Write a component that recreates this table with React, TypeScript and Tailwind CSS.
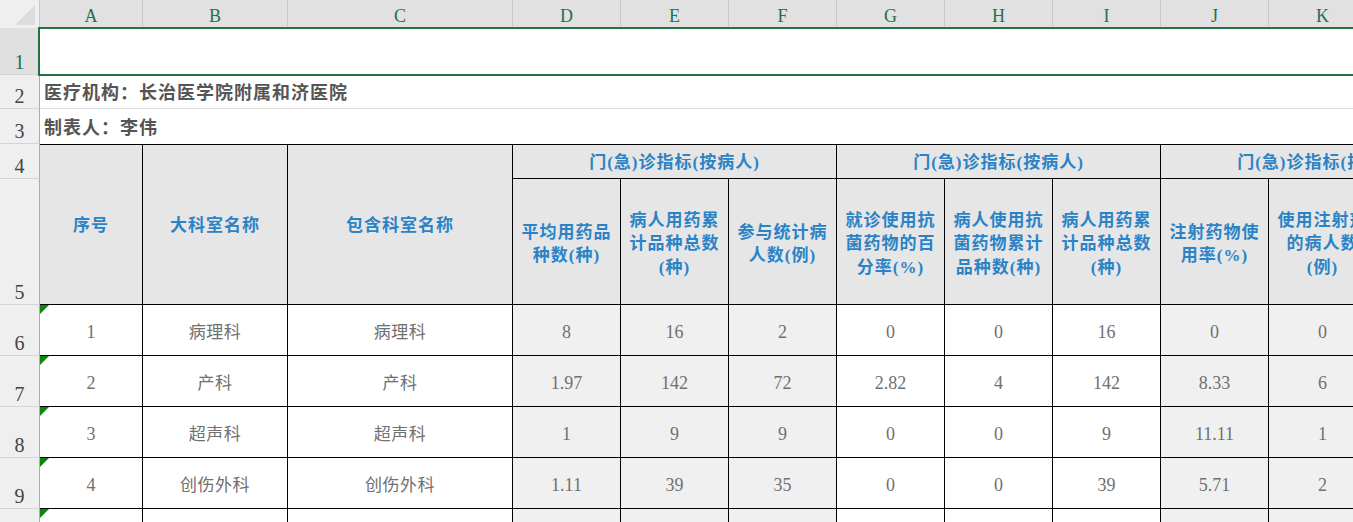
import React from 'react';

const cols = ['A', 'B', 'C', 'D', 'E', 'F', 'G', 'H', 'I', 'J', 'K', 'L'];

const subHeaders: string[][] = [
    ['平均用药品', '种数(种)'],
    ['病人用药累', '计品种总数', '(种)'],
    ['参与统计病', '人数(例)'],
    ['就诊使用抗', '菌药物的百', '分率(%)'],
    ['病人使用抗', '菌药物累计', '品种数(种)'],
    ['病人用药累', '计品种总数', '(种)'],
    ['注射药物使', '用率(%)'],
    ['使用注射剂', '的病人数', '(例)'],
    [''],
];

const rows: string[][] = [
    ['1', '病理科', '病理科', '8', '16', '2', '0', '0', '16', '0', '0', ''],
    ['2', '产科', '产科', '1.97', '142', '72', '2.82', '4', '142', '8.33', '6', ''],
    ['3', '超声科', '超声科', '1', '9', '9', '0', '0', '9', '11.11', '1', ''],
    ['4', '创伤外科', '创伤外科', '1.11', '39', '35', '0', '0', '39', '5.71', '2', ''],
    ['', '', '', '', '', '', '', '', '', '', '', ''],
];

const FONT = '[font-family:"Liberation_Serif","Noto_Sans_CJK_SC",serif]';

function RowHead({ n, active }: { n: number; active?: boolean }) {
    return (
        <div
            className={`flex items-end justify-center pb-[2px] border-r border-b border-r-[#ababab] border-b-[#d4d4d4] text-[20px] leading-none ${FONT} ${
                active ? 'bg-[#e0e0e0] text-[#217346]' : 'bg-[#efefef] text-[#444]'
            }`}
        >
            {n}
        </div>
    );
}

export default function App() {
    return (
        <div className={`w-[1353px] h-[522px] overflow-hidden bg-white ${FONT}`}>
            <div className="grid w-[1485px] grid-cols-[40px_103px_145px_225px_repeat(9,108px)] grid-rows-[28px_47px_34px_35px_35px_126px_repeat(5,51px)]">
                {/* Column headers */}
                <div className="relative bg-[#efefef] border-r border-r-[#c8c8c8]">
                    <div className="absolute right-[4px] bottom-[3px] w-0 h-0 border-l-[20px] border-b-[20px] border-l-transparent border-b-[#dcdcdc]" />
                </div>
                {cols.map((c) => (
                    <div
                        key={c}
                        className="flex items-end justify-center pb-[3px] bg-[#e1e1e1] border-r border-r-[#c8c8c8] text-[18px] leading-none text-[#1e7052]"
                    >
                        {c}
                    </div>
                ))}

                {/* Row 1 - selected */}
                <RowHead n={1} active />
                <div className="relative col-span-12">
                    <div className="absolute -top-px -left-[2px] -bottom-px right-0 border-2 border-[#217346]" />
                </div>

                {/* Row 2 */}
                <RowHead n={2} />
                <div className="col-span-12 flex items-center pl-[4px] pt-[3px] border-b border-b-[#dadada] text-[18px] font-bold tracking-[1px] text-[#555]">
                    医疗机构：长治医学院附属和济医院
                </div>

                {/* Row 3 */}
                <RowHead n={3} />
                <div className="col-span-12 flex items-center pl-[4px] pt-[3px] text-[18px] font-bold tracking-[1px] text-[#555]">
                    制表人：李伟
                </div>

                {/* Row 4 */}
                <RowHead n={4} />
                {['序号', '大科室名称', '包含科室名称'].map((t) => (
                    <div
                        key={t}
                        className="row-span-2 flex items-center justify-center pt-[3px] bg-[#e6e6e6] border-t border-r border-b border-black text-[17px] font-bold tracking-[1px] text-[#2b83c6]"
                    >
                        {t}
                    </div>
                ))}
                {[0, 1, 2].map((i) => (
                    <div
                        key={i}
                        className="col-span-3 flex items-center justify-center pt-[3px] bg-[#e6e6e6] border-t border-r border-b border-black text-[17px] font-bold tracking-[1px] text-[#2b83c6]"
                    >
                        门(急)诊指标(按病人)
                    </div>
                ))}

                {/* Row 5 */}
                <RowHead n={5} />
                {subHeaders.map((lines, i) => (
                    <div
                        key={i}
                        className="flex flex-col items-center justify-center pt-[5px] bg-[#e6e6e6] border-r border-b border-black text-[17px] leading-[23.5px] font-bold tracking-[1px] text-[#2b83c6]"
                    >
                        {lines.map((l, j) => (
                            <span key={j} className="whitespace-nowrap">{l}</span>
                        ))}
                    </div>
                ))}

                {/* Data rows */}
                {rows.map((r, ri) => (
                    <React.Fragment key={ri}>
                        <RowHead n={ri + 6} />
                        {r.map((v, ci) => {
                            const shaded = (ci >= 3 && ci <= 5) || ci >= 9;
                            const isNum = ci === 0 || ci >= 3;
                            return (
                                <div
                                    key={ci}
                                    className={`relative flex items-center justify-center border-r border-b border-black text-[#707070] ${
                                        shaded ? 'bg-[#f0f0f0]' : 'bg-white'
                                    } ${isNum ? 'text-[18px]' : 'text-[17px] tracking-[0.5px]'}`}
                                >
                                    {ci === 0 && (
                                        <div className="absolute left-0 top-0 w-0 h-0 border-t-[9px] border-r-[9px] border-t-[#0b870b] border-r-transparent" />
                                    )}
                                    <span className="pt-[5px]">{v}</span>
                                </div>
                            );
                        })}
                    </React.Fragment>
                ))}
            </div>
        </div>
    );
}
